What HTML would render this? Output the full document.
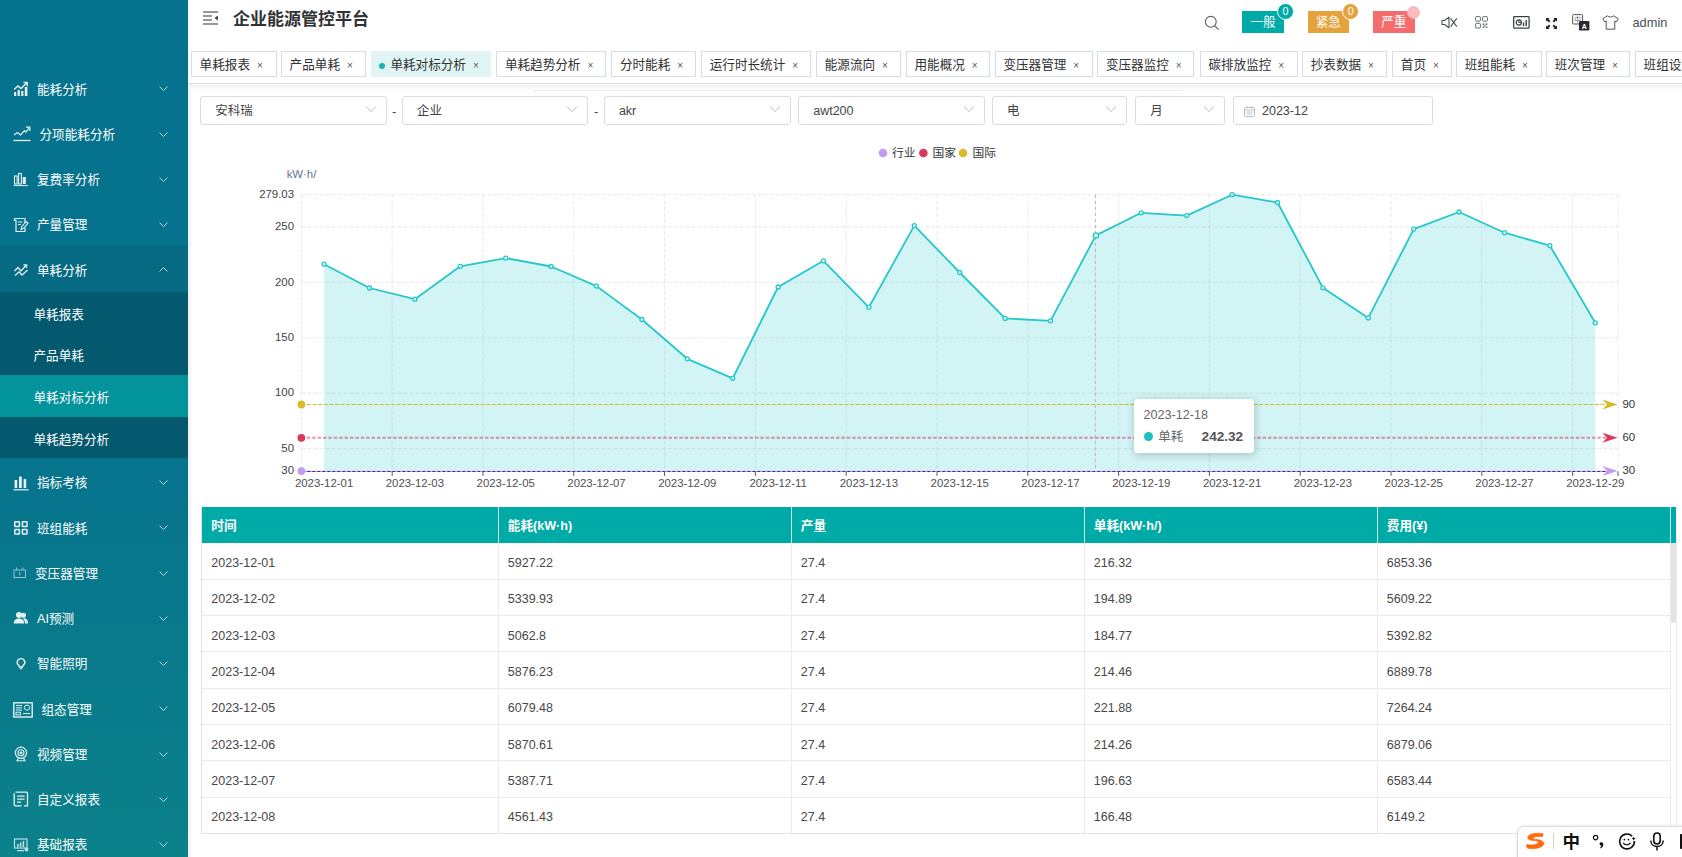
<!DOCTYPE html><html lang="zh-CN"><head><meta charset="utf-8"><title>企业能源管控平台</title><style>
*{box-sizing:border-box;margin:0;padding:0}
html,body{width:1682px;height:857px;overflow:hidden;background:#fff;font-family:"Liberation Sans","Noto Sans CJK SC",sans-serif;color:#303133}
body{position:relative}
.abs{position:absolute}
#side{position:absolute;left:0;top:0;width:188px;height:857px;background:linear-gradient(180deg,#05728e 0%,#06748d 55%,#0b818a 100%);color:#fff;font-size:12.6px}
.mi{position:absolute;left:0;width:188px;height:45.25px;line-height:45.25px;white-space:nowrap}
.mi .t{position:absolute;left:37px;top:3.1px}
.mi svg.ic{opacity:.9;position:absolute;left:13px;top:16.3px;width:16px;height:16px}
.mi svg.ar{position:absolute;left:158px;top:19.9px;width:11px;height:9px}
.sub{position:absolute;left:0;width:188px;height:41.7px;line-height:47.3px;background:#04596f;padding-left:33.5px;overflow:hidden;white-space:nowrap}
.sub.on{background:#03939b}
#top{position:absolute;left:188px;top:0;width:1494px;height:45px;background:#fff}
#title{position:absolute;left:233px;top:7.6px;font-size:17px;font-weight:bold;color:#303133;line-height:24px;white-space:nowrap;letter-spacing:0}
#tabs{position:absolute;left:188px;top:45px;width:1494px;height:38.5px;background:#fff;border-bottom:1px solid #d8dce5;box-shadow:0 1px 2px rgba(0,0,0,.04)}
.tab{position:absolute;top:51px;height:26px;border:1px solid #d8dce5;background:#fff;font-size:12.6px;line-height:26.6px;color:#303133;white-space:nowrap;padding-left:7.6px}
.tab.on{background:#e0f5f4;border-color:#e0f5f4;color:#303133}
.tab .x{display:inline-block;margin-left:7px;font-size:10px;color:#555;position:relative;top:-0.3px}
.sel{position:absolute;top:96.2px;height:29.2px;border:1px solid #d9dce2;border-radius:3px;background:#fff;font-size:12.5px;line-height:29px;color:#444;padding-left:14px;white-space:nowrap}
.sel svg{position:absolute;right:9px;top:8px;width:12px;height:8px}
.dash{position:absolute;top:104px;font-size:13px;color:#444}
#tbl{position:absolute;left:201px;top:507px;width:1469px;height:327.5px;border:1px solid #e6ebf0;border-top:none;font-size:12.4px;color:#4a4a4a}
.th{position:absolute;top:0;height:36px;background:#00aaa7;color:#fff;font-weight:bold;font-size:11.6px;line-height:36px;padding-left:9.5px;border-right:1px solid #e8eef0}
.td{position:absolute;height:36.4px;line-height:36.4px;padding-left:9.5px;border-right:1px solid #ebeef5;border-bottom:1px solid #ebeef5;white-space:nowrap}
</style></head><body>
<div id="side">
<div class="abs" style="left:0;top:245.6px;width:188px;height:46px;background:#066a83"></div>
<div class="mi" style="top:64.6px"><svg class="ic" viewBox="0 0 16 16"><g fill="#fff"><rect x="1" y="11" width="2.2" height="4"/><rect x="4.6" y="9" width="2.2" height="6"/><rect x="8.2" y="10" width="2.2" height="5"/><rect x="11.8" y="6" width="2.6" height="9"/></g><path d="M1 8.5 L5 5 L8 7.5 L13.5 2" fill="none" stroke="#fff" stroke-width="1.4"/><path d="M10.5 1.5 H14.2 V5.2" fill="none" stroke="#fff" stroke-width="1.4"/></svg><span class="t" style="left:37.0px">能耗分析</span><svg class="ar" viewBox="0 0 11 9"><path d="M1.5 2.5 L5.5 6.5 L9.5 2.5" fill="none" stroke="#b5d6dd" stroke-width="1"/></svg></div>
<div class="mi" style="top:109.8px"><svg class="ic" style="width:18px" viewBox="0 0 18 16"><path d="M1 9 L4.5 6.5 L7.5 9 L11.5 4.5 L13 6 L16.5 1.5" fill="none" stroke="#fff" stroke-width="1.2"/><path d="M13 1.2 H16.8 V5" fill="none" stroke="#fff" stroke-width="1.2"/><path d="M0.5 14.5 H17.5" stroke="#fff" stroke-width="1.3"/></svg><span class="t" style="left:39.5px">分项能耗分析</span><svg class="ar" viewBox="0 0 11 9"><path d="M1.5 2.5 L5.5 6.5 L9.5 2.5" fill="none" stroke="#b5d6dd" stroke-width="1"/></svg></div>
<div class="mi" style="top:155.1px"><svg class="ic" viewBox="0 0 16 16"><g fill="none" stroke="#fff" stroke-width="1.1"><rect x="1.5" y="5" width="2.6" height="8"/><rect x="5.6" y="2.5" width="2.8" height="10.5"/></g><rect x="9.8" y="6" width="3" height="7" fill="#fff"/><path d="M0.5 14.6 H15" stroke="#fff" stroke-width="1"/></svg><span class="t" style="left:37.0px">复费率分析</span><svg class="ar" viewBox="0 0 11 9"><path d="M1.5 2.5 L5.5 6.5 L9.5 2.5" fill="none" stroke="#b5d6dd" stroke-width="1"/></svg></div>
<div class="mi" style="top:200.3px"><svg class="ic" viewBox="0 0 16 16"><path d="M3.5 1.5 H12 V6 M12 11 V14.5 H3 V3.5 H1.5 V1.5 H3.5" fill="none" stroke="#fff" stroke-width="1.2"/><path d="M5 5 H9.5 M5 7.5 H8" stroke="#fff" stroke-width="1"/><path d="M8 12.5 L8.6 10 L13 4.5 L15 6 L10.5 11.5 Z" fill="none" stroke="#fff" stroke-width="1.1"/></svg><span class="t" style="left:37.0px">产量管理</span><svg class="ar" viewBox="0 0 11 9"><path d="M1.5 2.5 L5.5 6.5 L9.5 2.5" fill="none" stroke="#b5d6dd" stroke-width="1"/></svg></div>
<div class="mi" style="top:245.6px"><svg class="ic" viewBox="0 0 16 16"><path d="M1.5 9 L5 5.5 L8 9 L13 3.5" fill="none" stroke="#fff" stroke-width="1.3"/><path d="M10.5 3 H13.6 V6" fill="none" stroke="#fff" stroke-width="1.3"/><path d="M2 13.5 L6 9.8 L9 13 L14.5 8" fill="none" stroke="#fff" stroke-width="1.3"/></svg><span class="t" style="left:37.0px">单耗分析</span><svg class="ar" viewBox="0 0 11 9"><path d="M1.5 6.5 L5.5 2.5 L9.5 6.5" fill="none" stroke="#b5d6dd" stroke-width="1"/></svg></div>
<div class="mi" style="top:458.3px"><svg class="ic" viewBox="0 0 16 16"><g fill="#fff"><rect x="1.6" y="5" width="2.6" height="8" rx=".6"/><rect x="6" y="1.5" width="2.8" height="11.5" rx=".6"/><rect x="10.6" y="4" width="2.6" height="9" rx=".6"/></g><path d="M0.5 14.8 H15.5" stroke="#fff" stroke-width="1.2"/></svg><span class="t" style="left:37.0px">指标考核</span><svg class="ar" viewBox="0 0 11 9"><path d="M1.5 2.5 L5.5 6.5 L9.5 2.5" fill="none" stroke="#b5d6dd" stroke-width="1"/></svg></div>
<div class="mi" style="top:503.6px"><svg class="ic" viewBox="0 0 16 16"><g fill="none" stroke="#fff" stroke-width="1.5"><rect x="1.8" y="1.8" width="4.6" height="4.6" rx=".5"/><rect x="9.4" y="1.8" width="4.6" height="4.6" rx=".5"/><rect x="1.8" y="9.4" width="4.6" height="4.6" rx=".5"/><rect x="9.4" y="9.4" width="4.6" height="4.6" rx=".5"/></g></svg><span class="t" style="left:37.0px">班组能耗</span><svg class="ar" viewBox="0 0 11 9"><path d="M1.5 2.5 L5.5 6.5 L9.5 2.5" fill="none" stroke="#b5d6dd" stroke-width="1"/></svg></div>
<div class="mi" style="top:548.8px"><svg class="ic" style="top:17.7px;width:14px;height:14px" viewBox="0 0 14 14"><g fill="none" stroke="#9fd0da" stroke-width="1"><rect x="1" y="4" width="11.5" height="7.5"/><path d="M3.5 1.5 V4 M10 1.5 V4 M6.8 6 V9.5"/></g></svg><span class="t" style="left:35.0px">变压器管理</span><svg class="ar" viewBox="0 0 11 9"><path d="M1.5 2.5 L5.5 6.5 L9.5 2.5" fill="none" stroke="#b5d6dd" stroke-width="1"/></svg></div>
<div class="mi" style="top:594.1px"><svg class="ic" viewBox="0 0 16 16"><g fill="#fff"><circle cx="6" cy="5" r="3"/><path d="M0.8 13.5 C0.8 10 3 8.6 6 8.6 C9 8.6 11.2 10 11.2 13.5 Z"/><circle cx="10.5" cy="5.2" r="2.5"/><path d="M9.8 8.4 C13 8 15 9.6 15 13.5 H12 C12 11 11.2 9.4 9.8 8.4Z"/></g></svg><span class="t" style="left:37.0px">AI预测</span><svg class="ar" viewBox="0 0 11 9"><path d="M1.5 2.5 L5.5 6.5 L9.5 2.5" fill="none" stroke="#b5d6dd" stroke-width="1"/></svg></div>
<div class="mi" style="top:639.3px"><svg class="ic" viewBox="0 0 16 16"><path d="M8 2.6 A3.7 3.7 0 0 1 10.1 9.4 L9.5 11 H6.5 L5.9 9.4 A3.7 3.7 0 0 1 8 2.6Z" fill="none" stroke="#fff" stroke-width="1.4"/><path d="M6.8 12.6 H9.2" stroke="#fff" stroke-width="1.2"/></svg><span class="t" style="left:37.0px">智能照明</span><svg class="ar" viewBox="0 0 11 9"><path d="M1.5 2.5 L5.5 6.5 L9.5 2.5" fill="none" stroke="#b5d6dd" stroke-width="1"/></svg></div>
<div class="mi" style="top:684.6px"><svg class="ic" style="width:20px;top:17px" viewBox="0 0 20 16"><rect x=".8" y=".8" width="18.4" height="14.2" fill="none" stroke="#fff" stroke-width="1.4"/><g stroke="#fff" stroke-width="1" fill="none"><path d="M3 3.5 H9 M3 5.8 H9 M3 8 H9"/><circle cx="14" cy="5.6" r="2.6"/><rect x="3" y="10.2" width="4.5" height="2.6"/><path d="M10 11.5 H17"/></g></svg><span class="t" style="left:41.5px">组态管理</span><svg class="ar" viewBox="0 0 11 9"><path d="M1.5 2.5 L5.5 6.5 L9.5 2.5" fill="none" stroke="#b5d6dd" stroke-width="1"/></svg></div>
<div class="mi" style="top:729.8px"><svg class="ic" viewBox="0 0 16 16"><g fill="none" stroke="#fff"><circle cx="8" cy="6.8" r="5.6" stroke-width="1.2"/><circle cx="8" cy="6.8" r="3" stroke-width="1.1"/><circle cx="8" cy="6.8" r="1" fill="#fff"/><path d="M5.5 12 L4 14.8 H12 L10.5 12" stroke-width="1.1"/></g></svg><span class="t" style="left:37.0px">视频管理</span><svg class="ar" viewBox="0 0 11 9"><path d="M1.5 2.5 L5.5 6.5 L9.5 2.5" fill="none" stroke="#b5d6dd" stroke-width="1"/></svg></div>
<div class="mi" style="top:775.1px"><svg class="ic" viewBox="0 0 16 16"><path d="M2.5 1.2 H13.5 A1 1 0 0 1 14.5 2.2 V14.8 H11" fill="none" stroke="#fff" stroke-width="1.3"/><path d="M1.2 2.2 V13.8 A1 1 0 0 0 2.2 14.8 H8.5" fill="none" stroke="#fff" stroke-width="1.3"/><path d="M4.2 5.2 H11.6 M4.2 8.2 H11.6 M4.2 11.2 H8" stroke="#fff" stroke-width="1.2"/></svg><span class="t" style="left:37.0px">自定义报表</span><svg class="ar" viewBox="0 0 11 9"><path d="M1.5 2.5 L5.5 6.5 L9.5 2.5" fill="none" stroke="#b5d6dd" stroke-width="1"/></svg></div>
<div class="mi" style="top:820.3px"><svg class="ic" viewBox="0 0 16 16"><rect x="1.5" y="2" width="12.5" height="9" fill="none" stroke="#cfe8ee" stroke-width="1.2"/><g fill="#cfe8ee"><rect x="4" y="7" width="1.6" height="3"/><rect x="6.8" y="5.5" width="1.6" height="4.5"/><rect x="9.6" y="4" width="1.6" height="6"/><rect x="4" y="13" width="7" height="1.3"/><circle cx="13.5" cy="12.5" r="2"/></g></svg><span class="t" style="left:37.0px">基础报表</span><svg class="ar" viewBox="0 0 11 9"><path d="M1.5 2.5 L5.5 6.5 L9.5 2.5" fill="none" stroke="#b5d6dd" stroke-width="1"/></svg></div>
<div class="sub" style="top:291.50px">单耗报表</div>
<div class="sub" style="top:333.20px">产品单耗</div>
<div class="sub on" style="top:374.90px">单耗对标分析</div>
<div class="sub" style="top:416.60px">单耗趋势分析</div>
</div>
<div id="top"></div>
<svg class="abs" style="left:203px;top:11px;width:16px;height:14px" viewBox="0 0 16 14"><path d="M0 1 H15 M0 5 H9 M0 9 H9 M0 13 H15" stroke="#333" stroke-width="1.1" fill="none"/><path d="M14.8 4.6 V9.4 L11.6 7 Z" fill="#333"/></svg>
<div id="title">企业能源管控平台</div>
<svg class="abs" style="left:1203px;top:14px;width:18px;height:18px" viewBox="0 0 18 18"><circle cx="7.8" cy="7.8" r="5.4" fill="none" stroke="#5a5e66" stroke-width="1.1"/><path d="M11.8 11.8 L15.6 15.6" stroke="#5a5e66" stroke-width="1.2"/></svg>
<div class="abs" style="left:1242.0px;top:11.2px;width:42.0px;height:21.6px;background:#00aaa7;color:#fff;font-size:12.6px;line-height:23.6px;text-align:center">一般</div><div class="abs" style="left:1277.0px;top:3.0px;width:17px;height:17px;border-radius:50%;background:#00aaa7;border:1px solid #fff;color:#fff;font-size:10.8px;line-height:15px;text-align:center">0</div>
<div class="abs" style="left:1307.5px;top:11.2px;width:41.7px;height:21.6px;background:#e6a23c;color:#fff;font-size:12.6px;line-height:23.6px;text-align:center">紧急</div><div class="abs" style="left:1342.2px;top:3.0px;width:17px;height:17px;border-radius:50%;background:#e6a23c;border:1px solid #fff;color:#fff;font-size:10.8px;line-height:15px;text-align:center">0</div>
<div class="abs" style="left:1372.8px;top:11.2px;width:42.0px;height:21.6px;background:#f56c6c;color:#fff;font-size:12.6px;line-height:23.6px;text-align:center">严重</div><div class="abs" style="left:1406.5px;top:5.7px;width:13px;height:13px;border-radius:50%;background:#f9b9bd;border:1px solid #f9b9bd;color:#fbcdd0;font-size:8.5px;line-height:11px;text-align:center">3</div>
<svg class="abs" style="left:1441px;top:16px;width:17px;height:13px" viewBox="0 0 17 13"><path d="M1 4.5 H3.6 L8 1.2 V11.8 L3.6 8.5 H1 Z" fill="none" stroke="#4a4f57" stroke-width="1.1" stroke-linejoin="round"/><path d="M9.6 2.4 L15.8 10.6 M15.8 2.4 L9.6 10.6" stroke="#4a4f57" stroke-width="1.1"/></svg>
<svg class="abs" style="left:1475px;top:16px;width:14px;height:13px" viewBox="0 0 14 13"><g fill="none" stroke="#676c76" stroke-width="1"><rect x=".6" y=".6" width="4.8" height="4.6" rx=".8"/><rect x="7.6" y=".6" width="4.8" height="4.6" rx=".8"/><rect x=".6" y="7.4" width="4.8" height="4.6" rx=".8"/></g><g fill="#676c76"><rect x="7.6" y="7.4" width="1.6" height="1.6"/><rect x="10.6" y="7.4" width="1.8" height="1.6"/><rect x="9" y="9.2" width="1.6" height="1.4"/><rect x="7.6" y="10.6" width="1.6" height="1.4"/><rect x="10.8" y="10.6" width="1.6" height="1.4"/></g></svg>
<svg class="abs" style="left:1513px;top:16px;width:17px;height:13px" viewBox="0 0 17 13"><rect x=".7" y=".7" width="15.4" height="11.4" rx=".5" fill="none" stroke="#3c4047" stroke-width="1.25"/><circle cx="5.8" cy="6.5" r="2.6" fill="none" stroke="#3c4047" stroke-width="1.2"/><path d="M5.8 6.5 V3.6 M5.8 6.5 H8.6" stroke="#3c4047" stroke-width="1"/><path d="M10.6 10 V6.5 M13.2 10 V4" stroke="#3c4047" stroke-width="1.4"/></svg>
<svg class="abs" style="left:1545.5px;top:17.5px;width:11px;height:11px" viewBox="0 0 11 11"><g fill="#222"><path d="M0 0 H3.6 L2.5 1.1 L4.4 3 L3 4.4 L1.1 2.5 L0 3.6Z"/><path d="M11 0 V3.6 L9.9 2.5 L8 4.4 L6.6 3 L8.5 1.1 L7.4 0Z"/><path d="M0 11 V7.4 L1.1 8.5 L3 6.6 L4.4 8 L2.5 9.9 L3.6 11Z"/><path d="M11 11 H7.4 L8.5 9.9 L6.6 8 L8 6.6 L9.9 8.5 L11 7.4Z"/></g></svg>
<svg class="abs" style="left:1572px;top:14px;width:18px;height:17px" viewBox="0 0 18 17"><rect x=".6" y=".6" width="10" height="9.4" rx="1" fill="#fff" stroke="#555" stroke-width="1"/><rect x="7" y="7" width="10.4" height="9.6" rx="1" fill="#2b2b2b"/><text x="5.6" y="7.6" font-size="6.5" text-anchor="middle" fill="#666" font-family='"Noto Sans CJK SC",sans-serif'>中</text><text x="12.2" y="14.6" font-size="7" font-weight="bold" text-anchor="middle" fill="#fff" font-family='"Liberation Sans",sans-serif'>A</text></svg>
<svg class="abs" style="left:1602px;top:15px;width:17px;height:15px" viewBox="0 0 17 15"><path d="M5.6 .8 C6.6 2.4 10.4 2.4 11.4 .8 L16.2 3.6 L14.6 6.8 L12.8 6 V14.2 H4.2 V6 L2.4 6.8 L.8 3.6 Z" fill="none" stroke="#555" stroke-width="1" stroke-linejoin="round"/></svg>
<div class="abs" style="left:1632.5px;top:14px;font-size:12.8px;line-height:18px;color:#4a4f57">admin</div>
<div id="tabs"></div>
<div class="tab" style="left:191.0px;width:85.6px">单耗报表<span class="x">×</span></div>
<div class="tab" style="left:281.0px;width:84.8px">产品单耗<span class="x">×</span></div>
<div class="tab on" style="left:370.8px;width:120.4px"><span style="display:inline-block;width:6px;height:6px;border-radius:50%;background:#19b3b0;margin-right:5px;position:relative;top:0px"></span>单耗对标分析<span class="x">×</span></div>
<div class="tab" style="left:496.3px;width:110.2px">单耗趋势分析<span class="x">×</span></div>
<div class="tab" style="left:611.3px;width:84.3px">分时能耗<span class="x">×</span></div>
<div class="tab" style="left:701.1px;width:110.3px">运行时长统计<span class="x">×</span></div>
<div class="tab" style="left:816.1px;width:84.7px">能源流向<span class="x">×</span></div>
<div class="tab" style="left:905.9px;width:84.1px">用能概况<span class="x">×</span></div>
<div class="tab" style="left:994.8px;width:97.8px">变压器管理<span class="x">×</span></div>
<div class="tab" style="left:1097.3px;width:97.2px">变压器监控<span class="x">×</span></div>
<div class="tab" style="left:1199.8px;width:97.8px">碳排放监控<span class="x">×</span></div>
<div class="tab" style="left:1302.1px;width:85.0px">抄表数据<span class="x">×</span></div>
<div class="tab" style="left:1392.2px;width:59.4px">首页<span class="x">×</span></div>
<div class="tab" style="left:1456.1px;width:85.6px">班组能耗<span class="x">×</span></div>
<div class="tab" style="left:1546.1px;width:84.2px">班次管理<span class="x">×</span></div>
<div class="tab" style="left:1635.0px;width:85.0px">班组设置<span class="x">×</span></div>
<div class="abs" style="left:188px;top:84.5px;width:1494px;height:4px;background:linear-gradient(180deg,#f0f1f3,#fafafa)"></div>
<div class="abs" style="left:188px;top:84px;width:3px;height:773px;background:#f3f4f5"></div>
<div class="abs" style="left:533px;top:90.2px;width:650px;height:1.2px;background:#e8eaed;border-radius:1px"></div>
<div class="sel" style="left:200.2px;width:186.4px">安科瑞<svg viewBox="0 0 12 8"><path d="M1 1.5 L6 6.5 L11 1.5" fill="none" stroke="#b4b8bf" stroke-width="1"/></svg></div>
<div class="sel" style="left:401.9px;width:186.4px">企业<svg viewBox="0 0 12 8"><path d="M1 1.5 L6 6.5 L11 1.5" fill="none" stroke="#b4b8bf" stroke-width="1"/></svg></div>
<div class="sel" style="left:603.9px;width:186.8px">akr<svg viewBox="0 0 12 8"><path d="M1 1.5 L6 6.5 L11 1.5" fill="none" stroke="#b4b8bf" stroke-width="1"/></svg></div>
<div class="sel" style="left:798.2px;width:186.4px">awt200<svg viewBox="0 0 12 8"><path d="M1 1.5 L6 6.5 L11 1.5" fill="none" stroke="#b4b8bf" stroke-width="1"/></svg></div>
<div class="sel" style="left:992.0px;width:135.4px">电<svg viewBox="0 0 12 8"><path d="M1 1.5 L6 6.5 L11 1.5" fill="none" stroke="#b4b8bf" stroke-width="1"/></svg></div>
<div class="sel" style="left:1135.3px;width:90.2px">月<svg viewBox="0 0 12 8"><path d="M1 1.5 L6 6.5 L11 1.5" fill="none" stroke="#b4b8bf" stroke-width="1"/></svg></div>
<div class="dash" style="left:392px">-</div><div class="dash" style="left:594px">-</div>
<div class="sel" style="left:1233px;width:199.7px;padding-left:28px">2023-12<svg style="left:10px;top:8.5px;width:11px;height:11px;right:auto" viewBox="0 0 11 11"><rect x=".5" y="1.5" width="10" height="9" rx="1" fill="none" stroke="#b8bcc4" stroke-width="1"/><path d="M.5 4 H10.5 M3 .2 V2.4 M8 .2 V2.4 M2.5 6 H8.5 M2.5 8 H8.5" stroke="#b8bcc4" stroke-width=".9"/></svg></div>
<svg class="abs" style="left:0;top:0;width:1682px;height:857px" viewBox="0 0 1682 857" font-family='"Liberation Sans","Noto Sans CJK SC",sans-serif'>
<circle cx="883.0" cy="153" r="4.3" fill="#c49bf4"/><text x="892.0" y="157.2" font-size="11.8" fill="#333">行业</text>
<circle cx="923.4" cy="153" r="4.3" fill="#d93a5c"/><text x="932.4" y="157.2" font-size="11.8" fill="#333">国家</text>
<circle cx="963.0" cy="153" r="4.3" fill="#d4bc2d"/><text x="972.4" y="157.2" font-size="11.8" fill="#333">国际</text>
<text x="301.5" y="178" font-size="11.4" fill="#64738f" text-anchor="middle">kW·h/</text>
<g stroke="#e6e6e6" stroke-width="0.9" stroke-dasharray="4 2" fill="none">
<path d="M301.4 194.7 H1618.0"/>
<path d="M301.4 226.9 H1618.0"/>
<path d="M301.4 282.3 H1618.0"/>
<path d="M301.4 337.8 H1618.0"/>
<path d="M301.4 393.2 H1618.0"/>
<path d="M301.4 448.6 H1618.0"/>
<path d="M301.4 194.7 V470.8"/>
<path d="M392.2 194.7 V470.8"/>
<path d="M483.0 194.7 V470.8"/>
<path d="M573.8 194.7 V470.8"/>
<path d="M664.6 194.7 V470.8"/>
<path d="M755.4 194.7 V470.8"/>
<path d="M846.2 194.7 V470.8"/>
<path d="M937.0 194.7 V470.8"/>
<path d="M1027.8 194.7 V470.8"/>
<path d="M1118.6 194.7 V470.8"/>
<path d="M1209.4 194.7 V470.8"/>
<path d="M1300.2 194.7 V470.8"/>
<path d="M1391.0 194.7 V470.8"/>
<path d="M1481.8 194.7 V470.8"/>
<path d="M1572.6 194.7 V470.8"/>
<path d="M1618.0 194.7 V470.8"/>
</g>
<text x="294" y="197.9" font-size="11.4" fill="#444" text-anchor="end">279.03</text>
<text x="294" y="230.1" font-size="11.4" fill="#444" text-anchor="end">250</text>
<text x="294" y="285.5" font-size="11.4" fill="#444" text-anchor="end">200</text>
<text x="294" y="341.0" font-size="11.4" fill="#444" text-anchor="end">150</text>
<text x="294" y="396.4" font-size="11.4" fill="#444" text-anchor="end">100</text>
<text x="294" y="451.8" font-size="11.4" fill="#444" text-anchor="end">50</text>
<text x="294" y="474.0" font-size="11.4" fill="#444" text-anchor="end">30</text>
<path d="M324.1 264.2 L369.5 288.0 L414.9 299.2 L460.3 266.3 L505.7 258.1 L551.1 266.5 L596.5 286.1 L641.9 319.5 L687.3 358.8 L732.7 378.3 L778.1 287.0 L823.5 260.8 L868.9 307.3 L914.3 225.6 L959.7 272.5 L1005.1 318.4 L1050.5 320.8 L1095.9 235.4 L1141.3 212.8 L1186.7 215.6 L1232.1 194.7 L1277.5 202.5 L1322.9 287.8 L1368.3 317.9 L1413.7 229.1 L1459.1 212.0 L1504.5 232.7 L1549.9 245.7 L1595.3 322.8 L1595.3 470.8 L324.1 470.8 Z" fill="#1fc8c8" fill-opacity=".2"/>
<path d="M324.1 264.2 L369.5 288.0 L414.9 299.2 L460.3 266.3 L505.7 258.1 L551.1 266.5 L596.5 286.1 L641.9 319.5 L687.3 358.8 L732.7 378.3 L778.1 287.0 L823.5 260.8 L868.9 307.3 L914.3 225.6 L959.7 272.5 L1005.1 318.4 L1050.5 320.8 L1095.9 235.4 L1141.3 212.8 L1186.7 215.6 L1232.1 194.7 L1277.5 202.5 L1322.9 287.8 L1368.3 317.9 L1413.7 229.1 L1459.1 212.0 L1504.5 232.7 L1549.9 245.7 L1595.3 322.8" fill="none" stroke="#24c8ca" stroke-width="1.8" stroke-linejoin="round"/>
<path d="M1095.4 194.7 V470.8" stroke="#bdb4bc" stroke-width="1" stroke-dasharray="3.5 2.5"/>
<circle cx="324.1" cy="264.2" r="2.0" fill="#e9fbfb" stroke="#24c8ca" stroke-width="1.3"/>
<circle cx="369.5" cy="288.0" r="2.0" fill="#e9fbfb" stroke="#24c8ca" stroke-width="1.3"/>
<circle cx="414.9" cy="299.2" r="2.0" fill="#e9fbfb" stroke="#24c8ca" stroke-width="1.3"/>
<circle cx="460.3" cy="266.3" r="2.0" fill="#e9fbfb" stroke="#24c8ca" stroke-width="1.3"/>
<circle cx="505.7" cy="258.1" r="2.0" fill="#e9fbfb" stroke="#24c8ca" stroke-width="1.3"/>
<circle cx="551.1" cy="266.5" r="2.0" fill="#e9fbfb" stroke="#24c8ca" stroke-width="1.3"/>
<circle cx="596.5" cy="286.1" r="2.0" fill="#e9fbfb" stroke="#24c8ca" stroke-width="1.3"/>
<circle cx="641.9" cy="319.5" r="2.0" fill="#e9fbfb" stroke="#24c8ca" stroke-width="1.3"/>
<circle cx="687.3" cy="358.8" r="2.0" fill="#e9fbfb" stroke="#24c8ca" stroke-width="1.3"/>
<circle cx="732.7" cy="378.3" r="2.0" fill="#e9fbfb" stroke="#24c8ca" stroke-width="1.3"/>
<circle cx="778.1" cy="287.0" r="2.0" fill="#e9fbfb" stroke="#24c8ca" stroke-width="1.3"/>
<circle cx="823.5" cy="260.8" r="2.0" fill="#e9fbfb" stroke="#24c8ca" stroke-width="1.3"/>
<circle cx="868.9" cy="307.3" r="2.0" fill="#e9fbfb" stroke="#24c8ca" stroke-width="1.3"/>
<circle cx="914.3" cy="225.6" r="2.0" fill="#e9fbfb" stroke="#24c8ca" stroke-width="1.3"/>
<circle cx="959.7" cy="272.5" r="2.0" fill="#e9fbfb" stroke="#24c8ca" stroke-width="1.3"/>
<circle cx="1005.1" cy="318.4" r="2.0" fill="#e9fbfb" stroke="#24c8ca" stroke-width="1.3"/>
<circle cx="1050.5" cy="320.8" r="2.0" fill="#e9fbfb" stroke="#24c8ca" stroke-width="1.3"/>
<circle cx="1095.9" cy="235.4" r="2.6" fill="#e9fbfb" stroke="#24c8ca" stroke-width="1.3"/>
<circle cx="1141.3" cy="212.8" r="2.0" fill="#e9fbfb" stroke="#24c8ca" stroke-width="1.3"/>
<circle cx="1186.7" cy="215.6" r="2.0" fill="#e9fbfb" stroke="#24c8ca" stroke-width="1.3"/>
<circle cx="1232.1" cy="194.7" r="2.0" fill="#e9fbfb" stroke="#24c8ca" stroke-width="1.3"/>
<circle cx="1277.5" cy="202.5" r="2.0" fill="#e9fbfb" stroke="#24c8ca" stroke-width="1.3"/>
<circle cx="1322.9" cy="287.8" r="2.0" fill="#e9fbfb" stroke="#24c8ca" stroke-width="1.3"/>
<circle cx="1368.3" cy="317.9" r="2.0" fill="#e9fbfb" stroke="#24c8ca" stroke-width="1.3"/>
<circle cx="1413.7" cy="229.1" r="2.0" fill="#e9fbfb" stroke="#24c8ca" stroke-width="1.3"/>
<circle cx="1459.1" cy="212.0" r="2.0" fill="#e9fbfb" stroke="#24c8ca" stroke-width="1.3"/>
<circle cx="1504.5" cy="232.7" r="2.0" fill="#e9fbfb" stroke="#24c8ca" stroke-width="1.3"/>
<circle cx="1549.9" cy="245.7" r="2.0" fill="#e9fbfb" stroke="#24c8ca" stroke-width="1.3"/>
<circle cx="1595.3" cy="322.8" r="2.0" fill="#e9fbfb" stroke="#24c8ca" stroke-width="1.3"/>
<path d="M301.4 471.4 H1612.0" stroke="#c49bf4" stroke-width="1.4"/>
<path d="M307.4 471.5 H1610.0" stroke="#1f2a5c" stroke-width="0.9" stroke-dasharray="2.8 2.2"/>
<path d="M392.2 471.3 v4.6 M483.0 471.3 v4.6 M573.8 471.3 v4.6 M664.6 471.3 v4.6 M755.4 471.3 v4.6 M846.2 471.3 v4.6 M937.0 471.3 v4.6 M1027.8 471.3 v4.6 M1118.6 471.3 v4.6 M1209.4 471.3 v4.6 M1300.2 471.3 v4.6 M1391.0 471.3 v4.6 M1481.8 471.3 v4.6 M1572.6 471.3 v4.6 M1618.0 471.3 v4.6" stroke="#4a5680" stroke-width="1"/>
<text x="324.1" y="486.6" font-size="11.4" fill="#505050" text-anchor="middle">2023-12-01</text>
<text x="414.9" y="486.6" font-size="11.4" fill="#505050" text-anchor="middle">2023-12-03</text>
<text x="505.7" y="486.6" font-size="11.4" fill="#505050" text-anchor="middle">2023-12-05</text>
<text x="596.5" y="486.6" font-size="11.4" fill="#505050" text-anchor="middle">2023-12-07</text>
<text x="687.3" y="486.6" font-size="11.4" fill="#505050" text-anchor="middle">2023-12-09</text>
<text x="778.1" y="486.6" font-size="11.4" fill="#505050" text-anchor="middle">2023-12-11</text>
<text x="868.9" y="486.6" font-size="11.4" fill="#505050" text-anchor="middle">2023-12-13</text>
<text x="959.7" y="486.6" font-size="11.4" fill="#505050" text-anchor="middle">2023-12-15</text>
<text x="1050.5" y="486.6" font-size="11.4" fill="#505050" text-anchor="middle">2023-12-17</text>
<text x="1141.3" y="486.6" font-size="11.4" fill="#505050" text-anchor="middle">2023-12-19</text>
<text x="1232.1" y="486.6" font-size="11.4" fill="#505050" text-anchor="middle">2023-12-21</text>
<text x="1322.9" y="486.6" font-size="11.4" fill="#505050" text-anchor="middle">2023-12-23</text>
<text x="1413.7" y="486.6" font-size="11.4" fill="#505050" text-anchor="middle">2023-12-25</text>
<text x="1504.5" y="486.6" font-size="11.4" fill="#505050" text-anchor="middle">2023-12-27</text>
<text x="1595.3" y="486.6" font-size="11.4" fill="#505050" text-anchor="middle">2023-12-29</text>
<path d="M301.4 404.5 H1606.0" stroke="#d4bc2d" stroke-width="1" stroke-dasharray="4 1.6"/>
<path d="M301.4 437.8 H1606.0" stroke="#d93a5c" stroke-opacity=".55" stroke-width="1.9" stroke-dasharray="3.4 2"/>
<circle cx="301.4" cy="404.5" r="3.9" fill="#d4bc2d"/>
<path d="M1617.5 404.5 L1602.5 399.5 L1607.0 404.5 L1602.5 409.5 Z" fill="#d4bc2d"/>
<text x="1622.5" y="407.8" font-size="11.4" fill="#333">90</text>
<circle cx="301.4" cy="437.8" r="3.9" fill="#d93a5c"/>
<path d="M1617.5 437.8 L1602.5 432.8 L1607.0 437.8 L1602.5 442.8 Z" fill="#d93a5c"/>
<text x="1622.5" y="441.1" font-size="11.4" fill="#333">60</text>
<circle cx="301.4" cy="471.1" r="3.9" fill="#c49bf4"/>
<path d="M1617.5 471.1 L1602.5 466.1 L1607.0 471.1 L1602.5 476.1 Z" fill="#c49bf4"/>
<text x="1622.5" y="474.4" font-size="11.4" fill="#333">30</text>
</svg>
<div class="abs" style="left:1133.6px;top:398.6px;width:120.4px;height:54.2px;background:#fff;border-radius:4px;box-shadow:0.5px 1.5px 9px rgba(0,0,0,.2)"></div>
<div class="abs" style="left:1143.5px;top:406px;font-size:12.6px;line-height:18px;color:#666">2023-12-18</div>
<div class="abs" style="left:1143.5px;top:432px;width:9px;height:9px;border-radius:50%;background:#1fbfc0"></div>
<div class="abs" style="left:1158.3px;top:427.5px;font-size:12.5px;line-height:18px;color:#666">单耗</div>
<div class="abs" style="left:1201.6px;top:427.5px;font-size:13.6px;line-height:18px;color:#555;font-weight:bold">242.32</div>
<div class="abs" style="left:201px;top:507.3px;width:1475px;height:35.7px;background:#00aaa7"></div>
<div class="abs" style="left:201px;top:507px;width:1px;height:327px;background:#dfe3e6"></div>
<div class="abs" style="left:201px;top:833.2px;width:1475px;height:1px;background:#e2e5e8"></div>
<div class="abs" style="left:1676px;top:507px;width:1px;height:350px;background:#ececec"></div>
<div class="abs" style="left:1670.3px;top:543px;width:5.4px;height:80.4px;background:#e4e4e4;border-radius:0 0 3px 3px"></div>
<div class="abs" style="left:211.3px;top:507.3px;height:35.7px;line-height:38.6px;font-size:12.6px;font-weight:bold;color:#fff;white-space:nowrap">时间</div>
<div class="abs" style="left:497.5px;top:507.3px;width:1px;height:35.7px;background:#cdeeed"></div>
<div class="abs" style="left:507.8px;top:507.3px;height:35.7px;line-height:38.6px;font-size:12.6px;font-weight:bold;color:#fff;white-space:nowrap">能耗(kW·h)</div>
<div class="abs" style="left:790.5px;top:507.3px;width:1px;height:35.7px;background:#cdeeed"></div>
<div class="abs" style="left:800.8px;top:507.3px;height:35.7px;line-height:38.6px;font-size:12.6px;font-weight:bold;color:#fff;white-space:nowrap">产量</div>
<div class="abs" style="left:1083.5px;top:507.3px;width:1px;height:35.7px;background:#cdeeed"></div>
<div class="abs" style="left:1093.8px;top:507.3px;height:35.7px;line-height:38.6px;font-size:12.6px;font-weight:bold;color:#fff;white-space:nowrap">单耗(kW·h/)</div>
<div class="abs" style="left:1376.5px;top:507.3px;width:1px;height:35.7px;background:#cdeeed"></div>
<div class="abs" style="left:1386.8px;top:507.3px;height:35.7px;line-height:38.6px;font-size:12.6px;font-weight:bold;color:#fff;white-space:nowrap">费用(¥)</div>
<div class="abs" style="left:1669.5px;top:507.3px;width:1px;height:35.7px;background:#cdeeed"></div>
<div class="abs" style="left:497.5px;top:543px;width:1px;height:290.4px;background:#ebebeb"></div>
<div class="abs" style="left:790.5px;top:543px;width:1px;height:290.4px;background:#ebebeb"></div>
<div class="abs" style="left:1083.5px;top:543px;width:1px;height:290.4px;background:#ebebeb"></div>
<div class="abs" style="left:1376.5px;top:543px;width:1px;height:290.4px;background:#ebebeb"></div>
<div class="abs" style="left:1669.5px;top:543px;width:1px;height:290.4px;background:#ebebeb"></div>
<div class="abs" style="left:201.5px;top:578.8px;width:1468.5px;height:1px;background:#ebebeb"></div>
<div class="abs" style="left:211.3px;top:543.0px;height:36.3px;line-height:40.1px;font-size:12.5px;color:#484848;white-space:nowrap">2023-12-01</div>
<div class="abs" style="left:507.8px;top:543.0px;height:36.3px;line-height:40.1px;font-size:12.5px;color:#484848;white-space:nowrap">5927.22</div>
<div class="abs" style="left:800.8px;top:543.0px;height:36.3px;line-height:40.1px;font-size:12.5px;color:#484848;white-space:nowrap">27.4</div>
<div class="abs" style="left:1093.8px;top:543.0px;height:36.3px;line-height:40.1px;font-size:12.5px;color:#484848;white-space:nowrap">216.32</div>
<div class="abs" style="left:1386.8px;top:543.0px;height:36.3px;line-height:40.1px;font-size:12.5px;color:#484848;white-space:nowrap">6853.36</div>
<div class="abs" style="left:201.5px;top:615.1px;width:1468.5px;height:1px;background:#ebebeb"></div>
<div class="abs" style="left:211.3px;top:579.3px;height:36.3px;line-height:40.1px;font-size:12.5px;color:#484848;white-space:nowrap">2023-12-02</div>
<div class="abs" style="left:507.8px;top:579.3px;height:36.3px;line-height:40.1px;font-size:12.5px;color:#484848;white-space:nowrap">5339.93</div>
<div class="abs" style="left:800.8px;top:579.3px;height:36.3px;line-height:40.1px;font-size:12.5px;color:#484848;white-space:nowrap">27.4</div>
<div class="abs" style="left:1093.8px;top:579.3px;height:36.3px;line-height:40.1px;font-size:12.5px;color:#484848;white-space:nowrap">194.89</div>
<div class="abs" style="left:1386.8px;top:579.3px;height:36.3px;line-height:40.1px;font-size:12.5px;color:#484848;white-space:nowrap">5609.22</div>
<div class="abs" style="left:201.5px;top:651.4px;width:1468.5px;height:1px;background:#ebebeb"></div>
<div class="abs" style="left:211.3px;top:615.6px;height:36.3px;line-height:40.1px;font-size:12.5px;color:#484848;white-space:nowrap">2023-12-03</div>
<div class="abs" style="left:507.8px;top:615.6px;height:36.3px;line-height:40.1px;font-size:12.5px;color:#484848;white-space:nowrap">5062.8</div>
<div class="abs" style="left:800.8px;top:615.6px;height:36.3px;line-height:40.1px;font-size:12.5px;color:#484848;white-space:nowrap">27.4</div>
<div class="abs" style="left:1093.8px;top:615.6px;height:36.3px;line-height:40.1px;font-size:12.5px;color:#484848;white-space:nowrap">184.77</div>
<div class="abs" style="left:1386.8px;top:615.6px;height:36.3px;line-height:40.1px;font-size:12.5px;color:#484848;white-space:nowrap">5392.82</div>
<div class="abs" style="left:201.5px;top:687.7px;width:1468.5px;height:1px;background:#ebebeb"></div>
<div class="abs" style="left:211.3px;top:651.9px;height:36.3px;line-height:40.1px;font-size:12.5px;color:#484848;white-space:nowrap">2023-12-04</div>
<div class="abs" style="left:507.8px;top:651.9px;height:36.3px;line-height:40.1px;font-size:12.5px;color:#484848;white-space:nowrap">5876.23</div>
<div class="abs" style="left:800.8px;top:651.9px;height:36.3px;line-height:40.1px;font-size:12.5px;color:#484848;white-space:nowrap">27.4</div>
<div class="abs" style="left:1093.8px;top:651.9px;height:36.3px;line-height:40.1px;font-size:12.5px;color:#484848;white-space:nowrap">214.46</div>
<div class="abs" style="left:1386.8px;top:651.9px;height:36.3px;line-height:40.1px;font-size:12.5px;color:#484848;white-space:nowrap">6889.78</div>
<div class="abs" style="left:201.5px;top:724.0px;width:1468.5px;height:1px;background:#ebebeb"></div>
<div class="abs" style="left:211.3px;top:688.2px;height:36.3px;line-height:40.1px;font-size:12.5px;color:#484848;white-space:nowrap">2023-12-05</div>
<div class="abs" style="left:507.8px;top:688.2px;height:36.3px;line-height:40.1px;font-size:12.5px;color:#484848;white-space:nowrap">6079.48</div>
<div class="abs" style="left:800.8px;top:688.2px;height:36.3px;line-height:40.1px;font-size:12.5px;color:#484848;white-space:nowrap">27.4</div>
<div class="abs" style="left:1093.8px;top:688.2px;height:36.3px;line-height:40.1px;font-size:12.5px;color:#484848;white-space:nowrap">221.88</div>
<div class="abs" style="left:1386.8px;top:688.2px;height:36.3px;line-height:40.1px;font-size:12.5px;color:#484848;white-space:nowrap">7264.24</div>
<div class="abs" style="left:201.5px;top:760.3px;width:1468.5px;height:1px;background:#ebebeb"></div>
<div class="abs" style="left:211.3px;top:724.5px;height:36.3px;line-height:40.1px;font-size:12.5px;color:#484848;white-space:nowrap">2023-12-06</div>
<div class="abs" style="left:507.8px;top:724.5px;height:36.3px;line-height:40.1px;font-size:12.5px;color:#484848;white-space:nowrap">5870.61</div>
<div class="abs" style="left:800.8px;top:724.5px;height:36.3px;line-height:40.1px;font-size:12.5px;color:#484848;white-space:nowrap">27.4</div>
<div class="abs" style="left:1093.8px;top:724.5px;height:36.3px;line-height:40.1px;font-size:12.5px;color:#484848;white-space:nowrap">214.26</div>
<div class="abs" style="left:1386.8px;top:724.5px;height:36.3px;line-height:40.1px;font-size:12.5px;color:#484848;white-space:nowrap">6879.06</div>
<div class="abs" style="left:201.5px;top:796.6px;width:1468.5px;height:1px;background:#ebebeb"></div>
<div class="abs" style="left:211.3px;top:760.8px;height:36.3px;line-height:40.1px;font-size:12.5px;color:#484848;white-space:nowrap">2023-12-07</div>
<div class="abs" style="left:507.8px;top:760.8px;height:36.3px;line-height:40.1px;font-size:12.5px;color:#484848;white-space:nowrap">5387.71</div>
<div class="abs" style="left:800.8px;top:760.8px;height:36.3px;line-height:40.1px;font-size:12.5px;color:#484848;white-space:nowrap">27.4</div>
<div class="abs" style="left:1093.8px;top:760.8px;height:36.3px;line-height:40.1px;font-size:12.5px;color:#484848;white-space:nowrap">196.63</div>
<div class="abs" style="left:1386.8px;top:760.8px;height:36.3px;line-height:40.1px;font-size:12.5px;color:#484848;white-space:nowrap">6583.44</div>
<div class="abs" style="left:211.3px;top:797.1px;height:36.3px;line-height:40.1px;font-size:12.5px;color:#484848;white-space:nowrap">2023-12-08</div>
<div class="abs" style="left:507.8px;top:797.1px;height:36.3px;line-height:40.1px;font-size:12.5px;color:#484848;white-space:nowrap">4561.43</div>
<div class="abs" style="left:800.8px;top:797.1px;height:36.3px;line-height:40.1px;font-size:12.5px;color:#484848;white-space:nowrap">27.4</div>
<div class="abs" style="left:1093.8px;top:797.1px;height:36.3px;line-height:40.1px;font-size:12.5px;color:#484848;white-space:nowrap">166.48</div>
<div class="abs" style="left:1386.8px;top:797.1px;height:36.3px;line-height:40.1px;font-size:12.5px;color:#484848;white-space:nowrap">6149.2</div>
<div class="abs" style="left:1516.5px;top:825.5px;width:200px;height:60px;background:#fff;border:1px solid #dcdcdc;border-radius:7px;box-shadow:0 0 3px rgba(0,0,0,.12)"></div>
<svg class="abs" style="left:1524px;top:832px;width:22px;height:18px" viewBox="0 0 22 18"><path d="M19.2 1.8 C14 .6 6.5 1.2 4.2 4.2 C2.2 7 6 8.2 10.5 8.6 C14.5 9 15.5 10.2 13 11.8 C10.5 13.2 6 13.4 2.2 12.6 L3.4 16.2 C9 17.2 16 16.4 19 13.4 C21.6 10.6 18.6 8.4 13 7.6 C9 7 8.2 6.2 10 5.2 C12.2 4.2 16 4.2 18.4 4.8 Z" fill="#ff6a0d" stroke="#ff6a0d" stroke-width=".7" stroke-linejoin="round"/></svg>
<div class="abs" style="left:1553px;top:832.5px;width:1px;height:16.5px;background:#d0d0d0"></div>
<div class="abs" style="left:1562.5px;top:829px;font-size:17.5px;line-height:24px;font-weight:bold;color:#111;font-family:'Noto Sans CJK SC',sans-serif">中</div>
<svg class="abs" style="left:1591px;top:833px;width:16px;height:18px" viewBox="0 0 16 18"><circle cx="4.6" cy="4.6" r="2.2" fill="none" stroke="#111" stroke-width="1.3"/><path d="M10.2 9.2 C12.2 9.2 12.6 11 12.2 12.4 C11.8 13.8 10.8 14.8 9.6 15.4 L9.2 14.6 C10 14 10.4 13.4 10.4 12.6 C9.2 12.6 8.6 11.8 8.6 10.8 C8.6 9.8 9.4 9.2 10.2 9.2Z" fill="#111"/></svg>
<svg class="abs" style="left:1617px;top:832px;width:20px;height:20px" viewBox="0 0 20 20"><path d="M15.2 4.2 A7.4 7.4 0 1 0 17.4 9" fill="none" stroke="#111" stroke-width="1.6"/><path d="M6.2 10.8 C7.6 13.6 12 13.6 13.4 10.8" fill="none" stroke="#111" stroke-width="1.4"/><circle cx="7.4" cy="7.6" r=".9" fill="#111"/><circle cx="11.4" cy="7.6" r=".9" fill="#111"/><path d="M16.6 4.4 L17.2 6 L18.8 6.6 L17.2 7.2 L16.6 8.8 L16 7.2 L14.4 6.6 L16 6 Z" fill="#111"/></svg>
<svg class="abs" style="left:1649px;top:832px;width:16px;height:20px" viewBox="0 0 16 20"><rect x="4.8" y="1" width="6.4" height="11" rx="3.2" fill="none" stroke="#111" stroke-width="1.6"/><path d="M1.8 8.4 C1.8 16.6 14.2 16.6 14.2 8.4 M8 14.6 V18.6" fill="none" stroke="#111" stroke-width="1.5"/></svg>
<div class="abs" style="left:1679.5px;top:834px;width:4px;height:15px;background:#111;border-radius:1px"></div>
</body></html>
